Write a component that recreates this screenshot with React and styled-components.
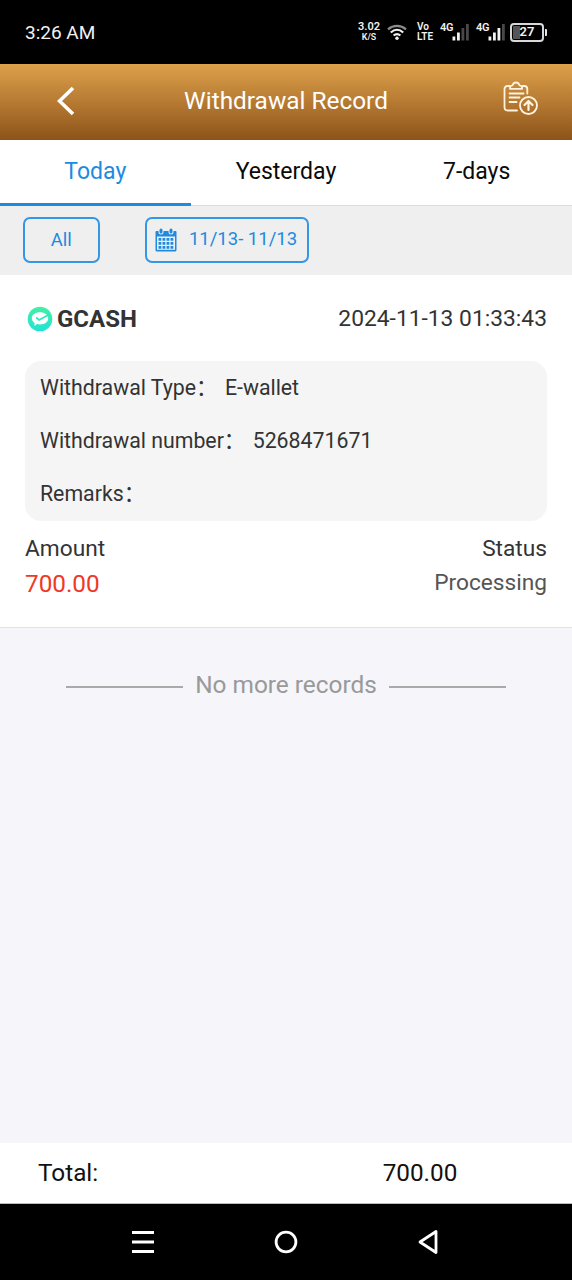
import React, { useState } from 'react';
import styled, { createGlobalStyle } from 'styled-components';

const GlobalStyle = createGlobalStyle`
  * {
    box-sizing: border-box;
  }

  body {
    margin: 0;
    background-color: #f5f5fa;
    font-family: Roboto, 'Noto Sans CJK SC', sans-serif;
  }

  button {
    font-family: inherit;
    margin: 0;
    padding: 0;
    border: none;
    background: none;
  }
`;

// Styled Components
const Screen = styled.div`
  display: flex;
  flex-direction: column;
  width: 572px;
  height: 1280px;
  overflow: hidden;
  background-color: #f5f5fa;
`;

const StatusBar = styled.div`
  display: flex;
  align-items: center;
  justify-content: space-between;
  flex: none;
  height: 64px;
  padding: 0 25px;
  background-color: #000;
  color: #f2f2f2;
`;

const Clock = styled.span`
  padding-top: 1px;
  font-size: 19px;
  line-height: 24px;
`;

const Indicators = styled.div`
  display: flex;
  align-items: center;
  height: 22px;
`;

const StackedLabel = styled.div`
  display: flex;
  flex-direction: column;
  align-items: ${(props) => (props.$align === 'start' ? 'flex-start' : 'center')};
  width: ${(props) => props.$width}px;
  margin-right: ${(props) => props.$gap}px;
  font-weight: 600;
  line-height: 10px;
`;

const SmallText = styled.span`
  height: 10px;
  font-size: ${(props) => props.$size}px;
  white-space: nowrap;
`;

const Network = styled.div`
  display: flex;
  align-items: flex-start;
  width: 30px;
  height: 20px;
  margin-right: ${(props) => props.$gap}px;
  font-size: 11px;
  font-weight: 600;
  line-height: 12px;
  letter-spacing: -0.3px;
`;

const SignalBars = styled.svg`
  flex: none;
  margin: 1px 0 0 -1px;
`;

const BatteryBody = styled.div`
  display: flex;
  align-items: center;
  justify-content: center;
  width: 34px;
  height: 19px;
  border: 2px solid #d8d8d8;
  border-radius: 4px;
  background: linear-gradient(90deg, #555 27%, transparent 27%);
  background-clip: content-box;
  padding: 1px;
  font-size: 13px;
  font-weight: 600;
  line-height: 14px;
`;

const BatteryTip = styled.div`
  width: 2px;
  height: 7px;
  margin-left: 1px;
  border-radius: 0 1px 1px 0;
  background-color: #e6e6e6;
`;

const Header = styled.header`
  display: grid;
  grid-template-columns: 132px 1fr 132px;
  align-items: center;
  flex: none;
  height: 76px;
  background: linear-gradient(180deg, #dda14b 0%, #b67a32 50%, #8c541a 100%);
  color: #fff;
`;

const HeaderButton = styled.button`
  display: flex;
  align-items: center;
  justify-content: center;
  height: 76px;
  padding: ${(props) => props.$padding};
  color: #fff;
`;

const PageTitle = styled.h1`
  margin: 0;
  padding-bottom: 2px;
  font-size: 24.4px;
  font-weight: 400;
  line-height: 30px;
  text-align: center;
`;

const Tabs = styled.nav`
  display: grid;
  grid-template-columns: repeat(3, 1fr);
  flex: none;
  height: 66px;
  border-bottom: 1px solid #dcdcdc;
  background-color: #fff;
`;

const Tab = styled.button`
  position: relative;
  height: 66px;
  padding-top: 1px;
  border-bottom: 3px solid ${(props) => (props.$active ? '#1e8ae0' : 'transparent')};
  color: ${(props) => (props.$active ? '#1e8ae0' : '#0a0a0a')};
  font-size: 23px;
  line-height: 28px;
`;

const FilterBar = styled.div`
  display: flex;
  gap: 45px;
  flex: none;
  height: 69px;
  padding: 11px 23px;
  background-color: #efefef;
`;

const FilterButton = styled.button`
  display: flex;
  align-items: center;
  justify-content: center;
  width: ${(props) => props.$width}px;
  height: 46px;
  border: 2px solid #3496e6;
  border-radius: 7px;
  color: #1e8ae0;
  font-size: 18.5px;
  line-height: 24px;
`;

const DateRange = styled.span`
  margin: 0 1px 3px 12px;
`;

const Card = styled.section`
  flex: none;
  height: 353px;
  padding: 27px 25px 0;
  border-bottom: 1px solid #e3e3e6;
  background-color: #fff;
  color: #333;
`;

const CardHeader = styled.div`
  display: flex;
  align-items: center;
  height: 34px;
  padding-left: 2px;
`;

const WalletName = styled.strong`
  flex: 1;
  margin-left: 4px;
  font-size: 24px;
  line-height: 28px;
`;

const Timestamp = styled.time`
  font-size: 22.8px;
  line-height: 28px;
`;

const Details = styled.dl`
  height: 160px;
  margin: 25px 0 0;
  padding: 0 15px;
  border-radius: 16px;
  background-color: #f5f5f5;
`;

const DetailRow = styled.div`
  display: flex;
  align-items: center;
  height: 53.3px;
  font-size: 21.3px;
  line-height: 28px;
`;

const DetailLabel = styled.dt`
  white-space: nowrap;
`;

const DetailValue = styled.dd`
  margin: 0 0 0 7.5px;
`;

const Summary = styled.div`
  display: flex;
  justify-content: space-between;
  margin-top: 11px;
`;

const SummaryColumn = styled.div`
  display: flex;
  flex-direction: column;
  align-items: ${(props) => (props.$end ? 'flex-end' : 'flex-start')};
  font-size: 22.7px;
  line-height: 34px;
`;

const Amount = styled.span`
  padding-top: 1px;
  color: #ee3a24;
  font-size: 24.3px;
`;

const Processing = styled.span`
  color: #555;
`;

const EndOfList = styled.div`
  display: flex;
  align-items: flex-start;
  justify-content: center;
  gap: 12px;
  flex: 1 0 0;
  padding-top: 42px;
  color: #999;
  font-size: 24.4px;
  line-height: 30px;
`;

const Rule = styled.div`
  width: 117px;
  height: 2px;
  margin-top: 15.5px;
  background-color: #aaa;
`;

const TotalBar = styled.footer`
  display: flex;
  align-items: center;
  flex: none;
  height: 61px;
  padding: 0 18px 0 38px;
  border-bottom: 1px solid #bbb;
  background-color: #fff;
  color: #111;
  font-size: 24.3px;
  line-height: 30px;
`;

const TotalLabel = styled.span`
  width: 248px;
`;

const TotalValue = styled.span`
  flex: 1;
  text-align: center;
`;

const NavigationBar = styled.div`
  display: grid;
  grid-template-columns: 143px 143px 140px;
  justify-content: center;
  flex: none;
  height: 76px;
  padding-right: 3px;
  background-color: #000;
`;

const NavButton = styled.button`
  display: flex;
  align-items: center;
  justify-content: center;
`;

const WifiIcon = () => (
  <svg width="20" height="17" viewBox="0 0 20 17" fill="none" strokeWidth="2.2">
    <path d="M1 5.3c5.3-4.6 12.7-4.6 18 0" stroke="#8a8a8a" />
    <path d="M3.8 8.5c3.8-3.4 8.6-3.4 12.4 0" stroke="#f2f2f2" />
    <path d="M6.6 11.5c2.2-1.9 4.6-1.9 6.8 0" stroke="#f2f2f2" />
    <circle cx="10" cy="14.2" r="1.7" fill="#f2f2f2" />
  </svg>
);

const SignalIcon = ({ level }) => (
  <SignalBars width="17" height="18" viewBox="0 0 17 18">
    {[4, 8, 12.5, 16.5].map((height, index) => (
      <rect
        key={height}
        x={0.5 + index * 4.5}
        y={17.5 - height}
        width="2.8"
        height={height}
        fill={index < level ? '#f2f2f2' : '#484848'}
      />
    ))}
  </SignalBars>
);

const BackIcon = () => (
  <svg width="18" height="30" viewBox="0 0 18 30" fill="none" stroke="currentColor">
    <path d="M16 2 2.5 15 16 28" strokeWidth="3.6" />
  </svg>
);

const RecordIcon = () => (
  <svg
    width="36"
    height="36"
    viewBox="0 0 36 36"
    fill="none"
    stroke="#fff3df"
    strokeWidth="1.8"
    strokeLinecap="round"
    strokeLinejoin="round"
  >
    <path d="M7 5H4.5C2.6 5 1.5 6.3 1.5 8v18c0 2 1.200 3.500 3.200 3.500H14" />
    <path d="M19.5 5h1.800c1.900 0 3 1.300 3 3v4.500" />
    <path d="M7 7.800c-.3-2 .8-3.300 2.500-3.500C10.200 2.300 11.500 1.500 13 1.500s2.800.8 3.500 2.800c1.800.2 2.900 1.500 2.600 3.500Z" />
    <path d="M6.500 12.500h14M6.500 16.500h10M6.500 21h7" />
    <circle cx="25.500" cy="24.500" r="8.500" />
    <path d="M25.500 29v-9M21.500 24l4-4 4 4" strokeWidth="2.200" />
  </svg>
);

const CalendarIcon = () => (
  <svg width="22" height="24" viewBox="0 0 22 24">
    <path
      d="M1.5 3h19a1 1 0 0 1 1 1v18a1.5 1.5 0 0 1-1.5 1.5H2A1.5 1.5 0 0 1 .5 22V4a1 1 0 0 1 1-1Z"
      fill="#1e8ae0"
    />
    <path d="M2 8.5h18v13.300H2z" fill="#efefef" />
    {[5, 15].map((x) => (
      <g key={x}>
        <rect x={x - 1.5} y="0" width="5" height="6.5" rx="2.5" fill="#efefef" />
        <rect x={x - 0.5} y="0.5" width="3" height="5" rx="1.5" fill="#1e8ae0" />
      </g>
    ))}
    {[10, 14, 18].map((y) =>
      [3.5, 7.5, 11.5, 15.5].map((x) => (
        <rect key={`${x}-${y}`} x={x} y={y} width="2.8" height="2.7" rx="0.5" fill="#1e8ae0" />
      ))
    )}
  </svg>
);

const WalletIcon = () => (
  <svg width="26" height="26" viewBox="0 0 26 26" fill="none">
    <defs>
      <linearGradient id="wallet" x1="0" y1="0" x2="0" y2="1">
        <stop offset="0" stopColor="#43efa3" />
        <stop offset="1" stopColor="#20e3d5" />
      </linearGradient>
    </defs>
    <circle cx="13" cy="13" r="12.3" fill="url(#wallet)" />
    <path
      d="M13 6.300c4.800 0 8.200 2.500 8.200 6s-3.400 6.200-8.200 6.200c-1 0-2-.1-2.900-.4l-2.700 2 .2-3.200C5.800 15.800 4.800 14.200 4.800 12.300c0-3.500 3.400-6 8.200-6Z"
      fill="#fff"
    />
    <path d="m9.200 11.500 3 2.500L22 8.500" stroke="#31e8bc" strokeWidth="1.7" />
  </svg>
);

const MenuIcon = () => (
  <svg width="22" height="24" viewBox="0 0 22 24" stroke="#fff" strokeWidth="3">
    <path d="M0 2.500h22M0 12h22M0 21.500h22" />
  </svg>
);

const HomeIcon = () => (
  <svg width="24" height="24" viewBox="0 0 24 24" fill="none" stroke="#fff" strokeWidth="2.8">
    <circle cx="12" cy="12" r="9.9" />
  </svg>
);

const PreviousIcon = () => (
  <svg width="22" height="26" viewBox="0 0 22 26" fill="none" stroke="#fff" strokeWidth="2.8">
    <path d="M19 2.500v21L3 13Z" strokeLinejoin="round" />
  </svg>
);

const tabs = ['Today', 'Yesterday', '7-days'];

const details = [
  { label: 'Withdrawal Type：', value: 'E-wallet' },
  { label: 'Withdrawal number：', value: '5268471671' },
  { label: 'Remarks：', value: '' },
];

const App = () => {
  const [activeTab, setActiveTab] = useState('Today');

  return (
    <Screen>
      <GlobalStyle />
      <StatusBar>
        <Clock>3:26 AM</Clock>
        <Indicators>
          <StackedLabel $width={22} $gap={7}>
            <SmallText $size={11}>3.02</SmallText>
            <SmallText $size={8.8}>K/S</SmallText>
          </StackedLabel>
          <WifiIcon />
          <StackedLabel $width={0} $gap={10} />
          <StackedLabel $width={17} $gap={6} $align="start">
            <SmallText $size={10}>Vo</SmallText>
            <SmallText $size={10}>LTE</SmallText>
          </StackedLabel>
          <Network $gap={6}>
            4G
            <SignalIcon level={2} />
          </Network>
          <Network $gap={4}>
            4G
            <SignalIcon level={3} />
          </Network>
          <BatteryBody>27</BatteryBody>
          <BatteryTip />
        </Indicators>
      </StatusBar>

      <Header>
        <HeaderButton aria-label="Back" $padding="0 0 2px">
          <BackIcon />
        </HeaderButton>
        <PageTitle>Withdrawal Record</PageTitle>
        <HeaderButton aria-label="Records" $padding="0 0 6px 29px">
          <RecordIcon />
        </HeaderButton>
      </Header>

      <Tabs>
        {tabs.map((tab) => (
          <Tab key={tab} $active={tab === activeTab} onClick={() => setActiveTab(tab)}>
            {tab}
          </Tab>
        ))}
      </Tabs>

      <FilterBar>
        <FilterButton $width={76.5}>All</FilterButton>
        <FilterButton $width={164}>
          <CalendarIcon />
          <DateRange>11/13- 11/13</DateRange>
        </FilterButton>
      </FilterBar>

      <Card>
        <CardHeader>
          <WalletIcon />
          <WalletName>GCASH</WalletName>
          <Timestamp>2024-11-13 01:33:43</Timestamp>
        </CardHeader>
        <Details>
          {details.map((item) => (
            <DetailRow key={item.label}>
              <DetailLabel>{item.label}</DetailLabel>
              <DetailValue>{item.value}</DetailValue>
            </DetailRow>
          ))}
        </Details>
        <Summary>
          <SummaryColumn>
            <span>Amount</span>
            <Amount>700.00</Amount>
          </SummaryColumn>
          <SummaryColumn $end>
            <span>Status</span>
            <Processing>Processing</Processing>
          </SummaryColumn>
        </Summary>
      </Card>

      <EndOfList>
        <Rule />
        <span>No more records</span>
        <Rule />
      </EndOfList>

      <TotalBar>
        <TotalLabel>Total:</TotalLabel>
        <TotalValue>700.00</TotalValue>
      </TotalBar>

      <NavigationBar>
        <NavButton aria-label="Recent apps">
          <MenuIcon />
        </NavButton>
        <NavButton aria-label="Home">
          <HomeIcon />
        </NavButton>
        <NavButton aria-label="Previous">
          <PreviousIcon />
        </NavButton>
      </NavigationBar>
    </Screen>
  );
};

export default App;
